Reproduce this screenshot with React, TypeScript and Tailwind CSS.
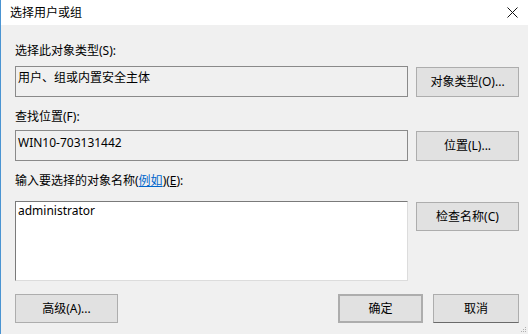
import React from "react";

const font = { fontFamily: '"Noto Sans", "Noto Sans CJK SC", sans-serif' };

function Btn({ children, className = "" }: { children: React.ReactNode; className?: string }) {
  return (
    <div
      className={`flex items-center justify-center bg-[#e1e1e1] border border-[#adadad] text-[12px] leading-[16px] text-black ${className}`}
    >
      {children}
    </div>
  );
}

export default function App() {
  return (
    <div
      className="relative w-[528px] h-[334px] bg-[#f0f0f0] border-l border-[#4a94d2] overflow-hidden text-black"
      style={font}
    >
      <div className="h-[25px] bg-white flex items-center justify-between pl-[9px] pr-[10px]">
        <span className="text-[12px] leading-[16px]">选择用户或组</span>
        <svg width="11" height="11" viewBox="0 0 11 11">
          <path d="M0.5 0.5 L10.5 10.5 M10.5 0.5 L0.5 10.5" stroke="#111" strokeWidth="1" fill="none" />
        </svg>
      </div>

      <div className="pl-[14px] flex flex-col">
        <div className="mt-[18px] text-[12px] leading-[16px]">选择此对象类型(S):</div>
        <div className="mt-[7px] flex items-start">
          <div className="w-[393px] h-[31px] border border-[#8a8a8a] pl-[2px] pt-[3px] text-[12px] leading-[16px]">
            用户、组或内置安全主体
          </div>
          <Btn className="ml-[8px] mt-[1px] w-[103px] h-[30px]">对象类型(O)...</Btn>
        </div>

        <div className="mt-[12px] text-[12px] leading-[16px]">查找位置(F):</div>
        <div className="mt-[5px] flex items-start">
          <div className="w-[393px] h-[31px] border border-[#8a8a8a] pl-[2px] pt-[4px] text-[12px] leading-[16px]">
            WIN10-703131442
          </div>
          <Btn className="ml-[8px] mt-[1px] w-[103px] h-[30px]">位置(L)...</Btn>
        </div>

        <div className="mt-[12px] text-[12px] leading-[16px]">
          输入要选择的对象名称(<span className="text-[#0066cc] underline">例如</span>)(<span className="underline">E</span>):
        </div>
        <div className="mt-[12px] flex items-start">
          <div className="w-[393px] h-[80px] bg-white border border-t-[#7a7a7a] border-l-[#7a7a7a] border-r-[#dcdcdc] border-b-[#dcdcdc] pl-[2px] pt-[1px] text-[12px] leading-[16px]">
            administrator
          </div>
          <Btn className="ml-[8px] mt-[1px] w-[103px] h-[29px]">检查名称(C)</Btn>
        </div>

        <div className="mt-[13px] flex items-start">
          <Btn className="w-[103px] h-[29px]">高级(A)...</Btn>
          <Btn className="ml-[220px] w-[85px] h-[29px] border-2 border-[#0078d7]">确定</Btn>
          <Btn className="ml-[10px] w-[86px] h-[29px] border-b-[#6a6a6a]">取消</Btn>
        </div>
      </div>

      <svg className="absolute right-[1px] bottom-[1px]" width="6" height="6" viewBox="0 0 6 6">
        <rect x="4" y="0" width="1" height="1" fill="#b0b0b0" />
        <rect x="2" y="2" width="1" height="1" fill="#b0b0b0" />
        <rect x="4" y="2" width="1" height="1" fill="#b0b0b0" />
        <rect x="0" y="4" width="1" height="1" fill="#b0b0b0" />
        <rect x="2" y="4" width="1" height="1" fill="#b0b0b0" />
        <rect x="4" y="4" width="1" height="1" fill="#b0b0b0" />
      </svg>
    </div>
  );
}
